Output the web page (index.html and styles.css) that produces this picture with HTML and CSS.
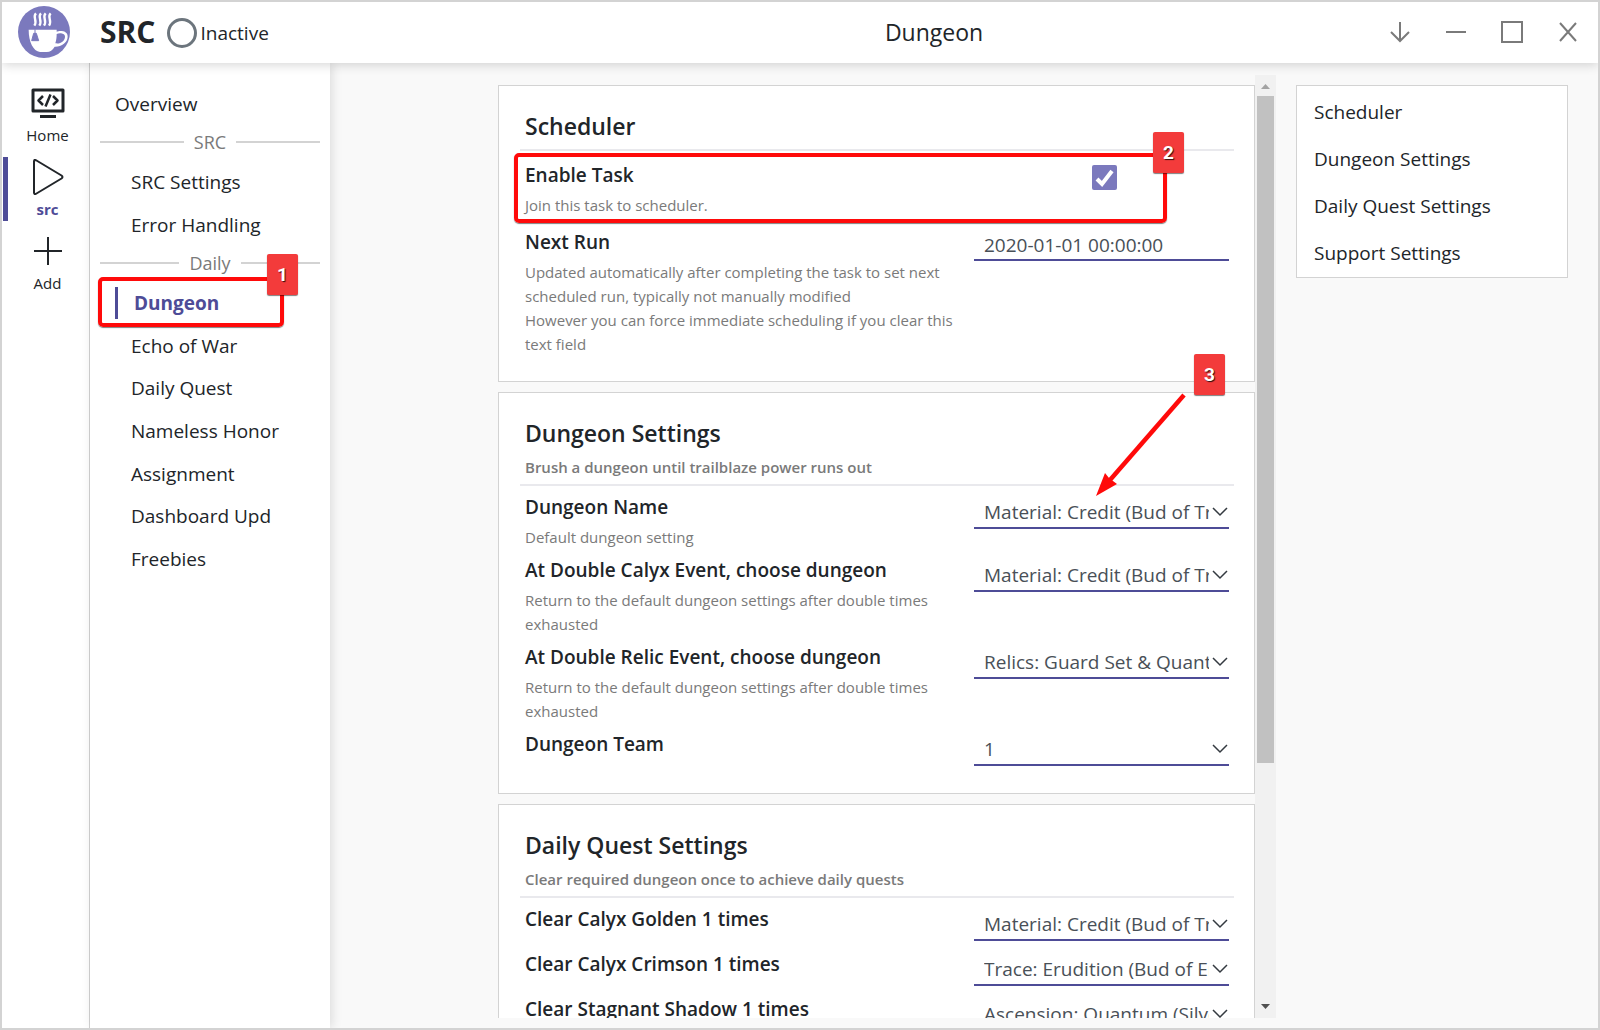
FILE: index.html
```html
<!DOCTYPE html>
<html lang="en">
<head>
<meta charset="utf-8">
<title>SRC - Dungeon</title>
<link rel="stylesheet" href="styles.css">
</head>
<body>
<header class="topbar">
  <div class="brand">
    <svg class="logo" viewBox="0 0 156 156" aria-hidden="true">
      <circle cx="78" cy="78" r="78" fill="#7b79bd"/>
      <path d="M32 71H116V77C124 74 149 72 149 92C149 109 130 123 110 122C104 132 96 138 86 138H66C46 135 32 108 32 71ZM116 84C116 94 115 103 112 112C128 115 141 104 141 92C141 81 124 80 116 84Z" fill="#fff" fill-rule="evenodd"/>
      <path d="M51 70V82M47 82H55L62 104H41Z" fill="#7b79bd" stroke="#7b79bd" stroke-width="3"/>
      <path d="M54 22C42 33 60 43 49 59M69 22C57 33 75 43 64 59M83 22C71 33 89 43 78 59M98 22C86 33 104 43 93 59" fill="none" stroke="#fff" stroke-width="7"/>
    </svg>
    <span class="brand-name">SRC</span>
    <span class="status"><span class="status-ring"></span>Inactive</span>
  </div>
  <h1 class="page-title">Dungeon</h1>
  <div class="window-controls">
    <button class="window-button" type="button" aria-label="Hide to tray"><svg viewBox="0 0 24 24"><path d="M12 2V21M3 12L12 21L21 12"/></svg></button>
    <button class="window-button" type="button" aria-label="Minimize"><svg viewBox="0 0 24 24"><path d="M2 12H22"/></svg></button>
    <button class="window-button" type="button" aria-label="Maximize"><svg viewBox="0 0 24 24"><path d="M2 2H22V22H2Z"/></svg></button>
    <button class="window-button" type="button" aria-label="Close"><svg viewBox="0 0 24 24"><path d="M4 3L20 21M20 3L4 21"/></svg></button>
  </div>
</header>
<div class="workspace">
  <nav class="aside" aria-label="Instances">
    <button class="aside-item" type="button">
      <svg viewBox="0 0 36 36"><path d="M3 5H33V26H3ZM10 31.500H26" stroke-width="3"/><path d="M13 11L8.500 15.500L13 20M23 11L27.500 15.500L23 20M20.500 9.500L15.500 21.500" stroke-width="2.500"/></svg>
      <span>Home</span>
    </button>
    <button class="aside-item active" type="button">
      <svg viewBox="0 0 36 36"><path d="M4 2.500Q4 0 6.500 1.500L31.500 16.500Q33.500 18 31.500 19.500L6.500 34.500Q4 36 4 33.500Z"/></svg>
      <span>src</span>
    </button>
    <button class="aside-item" type="button">
      <svg viewBox="0 0 36 36"><path d="M4 18H32M18 4V32"/></svg>
      <span>Add</span>
    </button>
  </nav>
  <nav class="menu" aria-label="Tasks">
    <button class="menu-item overview" type="button">Overview</button>
    <div class="menu-divider">SRC</div>
    <div class="menu-group pair">
      <button class="menu-item" type="button">SRC Settings</button>
      <button class="menu-item" type="button">Error Handling</button>
    </div>
    <div class="menu-divider">Daily</div>
    <div class="menu-group daily">
      <button class="menu-item active" type="button">Dungeon</button>
      <button class="menu-item" type="button">Echo of War</button>
      <button class="menu-item" type="button">Daily Quest</button>
      <button class="menu-item" type="button">Nameless Honor</button>
      <button class="menu-item" type="button">Assignment</button>
      <button class="menu-item" type="button">Dashboard Upd</button>
      <button class="menu-item" type="button">Freebies</button>
      <span class="mark-box mark-menu"></span>
      <span class="mark-badge badge-menu">1</span>
    </div>
  </nav>
  <main class="content">
    <div class="pane">
      <form class="settings">
        <section class="card">
          <header class="card-head"><h2>Scheduler</h2></header>
          <div class="row check-row">
            <div class="text"><label for="enable">Enable Task</label><p>Join this task to scheduler.</p></div>
            <div class="check"><input type="checkbox" id="enable" checked><svg viewBox="0 0 25 25"><path d="M5 14L10 19L20 6"/></svg></div>
          </div>
          <div class="row">
            <div class="text"><label for="next">Next Run</label><p>Updated automatically after completing the task to set next scheduled run, typically not manually modified<br>However you can force immediate scheduling if you clear this text field</p></div>
            <input class="field" type="text" id="next" value="2020-01-01 00:00:00">
          </div>
          <span class="mark-box mark-enable"></span>
          <span class="mark-badge badge-enable">2</span>
        </section>
        <section class="card">
          <header class="card-head"><h2>Dungeon Settings</h2><p>Brush a dungeon until trailblaze power runs out</p></header>
          <div class="row">
            <div class="text"><label for="name">Dungeon Name</label><p>Default dungeon setting</p></div>
            <div class="select"><select id="name"><option>Material: Credit (Bud of Treasures)</option></select><svg viewBox="0 0 16 10"><path d="M1 1L8 8L15 1"/></svg></div>
          </div>
          <div class="row">
            <div class="text"><label for="calyx">At Double Calyx Event, choose dungeon</label><p>Return to the default dungeon settings after double times exhausted</p></div>
            <div class="select"><select id="calyx"><option>Material: Credit (Bud of Treasures)</option></select><svg viewBox="0 0 16 10"><path d="M1 1L8 8L15 1"/></svg></div>
          </div>
          <div class="row">
            <div class="text"><label for="relic">At Double Relic Event, choose dungeon</label><p>Return to the default dungeon settings after double times exhausted</p></div>
            <div class="select"><select id="relic"><option>Relics: Guard Set &amp; Quantum Set</option></select><svg viewBox="0 0 16 10"><path d="M1 1L8 8L15 1"/></svg></div>
          </div>
          <div class="row">
            <div class="text"><label for="team">Dungeon Team</label></div>
            <div class="select"><select id="team"><option>1</option></select><svg viewBox="0 0 16 10"><path d="M1 1L8 8L15 1"/></svg></div>
          </div>
          <svg class="mark-arrow" viewBox="0 0 96 108" aria-hidden="true"><path d="M90 5L16 90" fill="none" stroke="#ff0a0a" stroke-width="4.500"/><path d="M2 106L11 83L15 88L23 94Z" fill="#ff0a0a"/></svg>
          <span class="mark-badge badge-name">3</span>
        </section>
        <section class="card">
          <header class="card-head"><h2>Daily Quest Settings</h2><p>Clear required dungeon once to achieve daily quests</p></header>
          <div class="row">
            <div class="text"><label for="golden">Clear Calyx Golden 1 times</label></div>
            <div class="select"><select id="golden"><option>Material: Credit (Bud of Treasures)</option></select><svg viewBox="0 0 16 10"><path d="M1 1L8 8L15 1"/></svg></div>
          </div>
          <div class="row">
            <div class="text"><label for="crimson">Clear Calyx Crimson 1 times</label></div>
            <div class="select"><select id="crimson"><option>Trace: Erudition (Bud of Erudition)</option></select><svg viewBox="0 0 16 10"><path d="M1 1L8 8L15 1"/></svg></div>
          </div>
          <div class="row">
            <div class="text"><label for="shadow">Clear Stagnant Shadow 1 times</label></div>
            <div class="select"><select id="shadow"><option>Ascension: Quantum (Silver Wolf)</option></select><svg viewBox="0 0 16 10"><path d="M1 1L8 8L15 1"/></svg></div>
          </div>
        </section>
      </form>
      <div class="scrollbar" aria-hidden="true">
        <svg viewBox="0 0 21 21"><path d="M6 14L10.500 9L15 14Z" fill="#a3a3a3"/></svg>
        <div class="track"><div class="thumb"></div></div>
        <svg viewBox="0 0 21 21"><path d="M6 7L10.500 12L15 7Z" fill="#505050"/></svg>
      </div>
    </div>
    <nav class="toc" aria-label="Sections">
      <button type="button">Scheduler</button>
      <button type="button">Dungeon Settings</button>
      <button type="button">Daily Quest Settings</button>
      <button type="button">Support Settings</button>
    </nav>
  </main>
</div>
</body>
</html>
```
FILE: styles.css
```css
* { box-sizing: border-box; }

body {
  margin: 0;
  height: 100vh;
  display: flex;
  flex-direction: column;
  border: 2px solid #d3d3d3;
  background: #f9f9f9;
  color: #212529;
  font: 19px/30px "Open Sans", "Noto Sans", sans-serif;
}

h1, h2, p { margin: 0; font-weight: 400; }

button, input, select { font: inherit; color: inherit; }

button {
  border: 0;
  padding: 0;
  background: none;
  text-align: left;
}

svg { display: block; }

.topbar {
  position: relative;
  z-index: 2;
  flex: 0 0 61px;
  display: flex;
  align-items: center;
  padding-bottom: 2px;
  background: #fff;
  box-shadow: 0 2px 10px rgba(0, 0, 0, 0.16);
}

.brand {
  flex: 0 0 494px;
  display: flex;
  align-items: center;
  padding-left: 16px;
}

.logo { width: 52px; height: 52px; }

.brand-name {
  margin-left: 30px;
  font-size: 30px;
  font-weight: 700;
}

.status {
  display: flex;
  align-items: center;
  gap: 3px;
  margin-left: 12px;
  padding-top: 2px;
}

.status-ring {
  width: 30px;
  height: 30px;
  border: 3px solid #6c757d;
  border-radius: 50%;
}

.page-title {
  flex: 1;
  font-size: 23px;
  text-align: center;
}

.window-controls { display: flex; padding-right: 2px; }

.window-button {
  width: 56px;
  height: 56px;
  display: grid;
  place-items: center;
}

.window-button svg {
  width: 24px;
  height: 24px;
  fill: none;
  stroke: #7a7a7a;
  stroke-width: 2;
}

.workspace { flex: 1; min-height: 0; display: flex; }

.aside {
  flex: 0 0 88px;
  display: flex;
  flex-direction: column;
  gap: 10px;
  padding: 20px 0 0 1px;
  border-right: 1px solid #d3d3d3;
  background: #fff;
}

.aside-item {
  height: 64px;
  padding-right: 2px;
  border-left: 5px solid transparent;
  display: flex;
  flex-direction: column;
  align-items: center;
  font-size: 15px;
  line-height: 24px;
}

.aside-item.active { border-color: #4e4c97; }

.aside-item.active span { color: #4e4c97; font-weight: 700; }

.aside-item svg {
  width: 36px;
  height: 36px;
  margin: 2px 0;
  fill: none;
  stroke: #212529;
  stroke-width: 2;
  stroke-linejoin: round;
}

.menu {
  position: relative;
  z-index: 1;
  flex: 0 0 240px;
  padding: 20px 10px;
  background: #fff;
  box-shadow: 2px 0 10px rgba(0, 0, 0, 0.12);
}

.menu-divider {
  height: 36px;
  display: flex;
  align-items: center;
  gap: 10px;
  padding-bottom: 2px;
  color: #7a7a7a;
  font-size: 18px;
}

.menu-divider::before, .menu-divider::after {
  content: "";
  flex: 1;
  height: 2px;
  background: #d3d3d3;
}

.menu-group {
  position: relative;
  display: grid;
  grid-auto-rows: 1fr;
  align-items: center;
}

.pair { height: 85px; }
.daily { height: 298px; }

.menu-item {
  height: 32px;
  margin-left: 15px;
  padding-left: 16px;
  line-height: 32px;
}

.overview { display: block; height: 42px; padding-left: 0; line-height: 42px; }

.menu-item.active {
  border-left: 3px solid #4e4c97;
  color: #4e4c97;
  font-weight: 700;
}

.content {
  flex: 1;
  min-width: 0;
  display: flex;
  justify-content: flex-end;
  align-items: flex-start;
  gap: 20px;
  padding: 12px 30px 10px 20px;
}

.pane {
  flex: 0 1 778px;
  min-width: 0;
  height: 100%;
  display: flex;
}

.settings {
  flex: 1;
  min-width: 0;
  display: flex;
  flex-direction: column;
  gap: 10px;
  padding-top: 10px;
  overflow-y: auto;
  scrollbar-width: none;
}

.card {
  position: relative;
  flex: none;
  display: flex;
  flex-direction: column;
  gap: 6px;
  padding: 25px 20px 25px 21px;
  border: 1px solid #d3d3d3;
  background: #fff;
}

.card-head {
  display: flex;
  flex-direction: column;
  gap: 7px;
  min-height: 40px;
  padding: 0 5px 5px;
  border-bottom: 2px solid #e9e9ed;
}

.card-head h2 {
  font-size: 23px;
  font-weight: 600;
}

.card-head p {
  color: #7a7a7a;
  font-size: 15px;
  font-weight: 600;
  line-height: 24px;
}

.row {
  display: flex;
  gap: 9px;
  padding: 0 5px;
  min-height: 39px;
}

.check-row { padding-top: 3px; padding-bottom: 4px; }

.text { flex: 1; min-width: 0; }

.text label { display: block; font-weight: 600; }

.text p {
  margin-top: 3px;
  color: #7a7a7a;
  font-size: 15px;
  line-height: 24px;
}

.field, .select, .check { flex: 0 0 255px; }

.field {
  width: 255px;
  height: 34px;
  padding: 4px 10px 0;
  border: 0;
  border-bottom: 2px solid #4e4c97;
  background: none;
  color: #495057;
}

.select {
  height: 37px;
  display: grid;
  align-items: center;
  border-bottom: 2px solid #4e4c97;
}

.select select {
  grid-area: 1 / 1;
  width: 100%;
  height: 35px;
  padding: 4px 20px 0 10px;
  appearance: none;
  border: 0;
  background: none;
  color: #495057;
}

.select svg {
  grid-area: 1 / 1;
  justify-self: end;
  width: 16px;
  height: 10px;
  margin: 4px 1px 0 0;
  fill: none;
  stroke: #343a40;
  stroke-width: 1.5;
  pointer-events: none;
}

.check {
  display: grid;
  justify-items: center;
  align-items: start;
  padding: 5px 0 0 6px;
}

.check input {
  grid-area: 1 / 1;
  width: 25px;
  height: 25px;
  margin: 0;
  appearance: none;
  border-radius: 2px;
  background: #7b79bd;
}

.check svg {
  grid-area: 1 / 1;
  width: 25px;
  height: 25px;
  fill: none;
  stroke: #fff;
  stroke-width: 4;
  pointer-events: none;
}

.scrollbar {
  flex: 0 0 21px;
  display: flex;
  flex-direction: column;
  background: #f1f1f1;
}

.scrollbar svg { width: 21px; height: 21px; }

.track { flex: 1; padding: 0 2px; }

.thumb { height: 74%; background: #c1c1c1; }

.toc {
  flex: 0 0 272px;
  height: 193px;
  margin-top: 10px;
  display: grid;
  grid-auto-rows: 1fr;
  padding: 2px 0 0 17px;
  border: 1px solid #d3d3d3;
  background: #fff;
}

/* Tutorial marks drawn over the interface */
.mark-box {
  position: absolute;
  border: 4px solid #ff0a0a;
  border-radius: 5px;
  box-shadow: 0 1px 1px rgba(0, 0, 0, 0.5);
  pointer-events: none;
}

.mark-badge {
  position: absolute;
  width: 31px;
  height: 41px;
  border-radius: 2px;
  background: #f33b3b;
  box-shadow: 0 1px 1px rgba(0, 0, 0, 0.5);
  color: #fff;
  font: 700 19px/41px Roboto, sans-serif;
  text-align: center;
  text-shadow: 1px 1px 1px rgba(0, 0, 0, 0.8);
}

.mark-menu { left: -2px; top: -5px; width: 186px; height: 50px; }
.badge-menu { left: 167px; top: -28px; }
.mark-enable { left: 15px; right: 87px; top: 67px; height: 70px; }
.badge-enable { right: 70px; top: 46px; }
.badge-name { right: 29px; top: -39px; }
.mark-arrow { position: absolute; right: 64px; top: -3px; width: 96px; height: 108px; }
```
